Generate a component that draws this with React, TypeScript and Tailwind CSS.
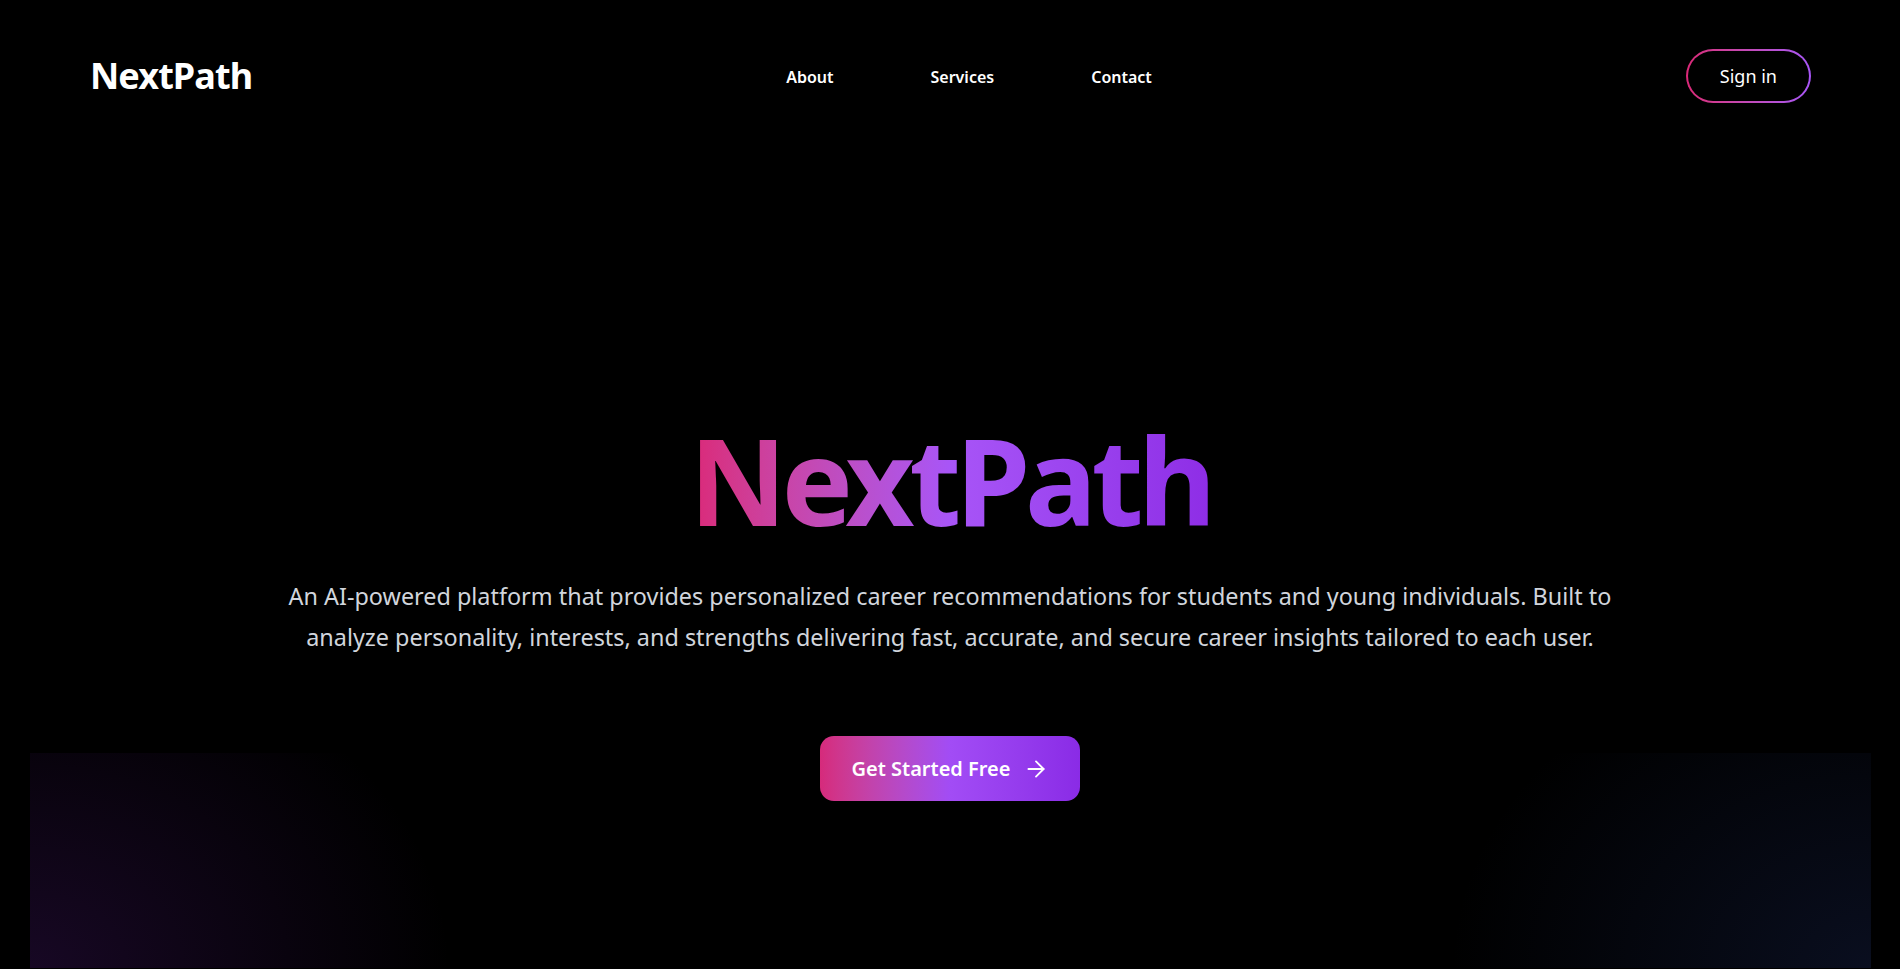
import { ArrowRight } from "lucide-react";

const NAV_LINKS = ["About", "Services", "Contact"];

function Header() {
  return (
    <header className="flex items-center justify-between pl-[90px] pr-[89px] pt-[49px]">
      <a href="#" className="text-[36px] font-bold leading-none tracking-[-0.025em] text-white">
        NextPath
      </a>

      <nav className="flex items-center gap-[97px] pt-[2px]">
        {NAV_LINKS.map((link) => (
          <a key={link} href="#" className="text-base font-semibold text-white">
            {link}
          </a>
        ))}
      </nav>

      <a href="#" className="rounded-full bg-linear-to-r from-[#db2777] to-[#a855f7] p-[2px]">
        <span className="flex h-[50px] items-center rounded-full bg-black px-8 text-lg text-white">Sign in</span>
      </a>
    </header>
  );
}

function Hero() {
  return (
    <section className="flex flex-col items-center text-center">
      <h1 className="mt-[317px] bg-linear-to-r from-[#db2777] via-[#a855f7] to-[#8e2de6] bg-clip-text text-[120px] font-bold leading-none tracking-[-0.045em] text-transparent">
        NextPath
      </h1>

      <p className="mt-[36px] text-[23.4px] leading-[41px] text-gray-300">
        An AI-powered platform that provides personalized career recommendations for students and young individuals. Built to
        <br />
        analyze personality, interests, and strengths delivering fast, accurate, and secure career insights tailored to each user.
      </p>

      <a
        href="#"
        className="relative z-10 mt-[78px] flex h-[65px] items-center gap-3 rounded-[14px] bg-linear-to-r from-[#d62a7b] via-[#a24cf5] to-[#8a2be6] px-[31px] text-[20px] font-semibold text-white"
      >
        Get Started Free
        <ArrowRight className="h-[26px] w-[26px]" strokeWidth={1.7} />
      </a>
    </section>
  );
}

export default function App() {
  return (
    <main
      className="relative h-[969px] overflow-hidden bg-black"
      style={{ fontFamily: '"Noto Sans", "Open Sans", sans-serif' }}
    >
      {/* faint glows in the bottom corners */}
      <div className="absolute left-[30px] right-[29px] top-[753px] bottom-[1px] bg-[radial-gradient(ellipse_420px_330px_at_0%_100%,rgba(90,30,140,0.26),transparent),radial-gradient(ellipse_420px_330px_at_100%_100%,rgba(40,60,130,0.24),transparent)]" />

      <div className="relative">
        <Header />
        <Hero />
      </div>
    </main>
  );
}
